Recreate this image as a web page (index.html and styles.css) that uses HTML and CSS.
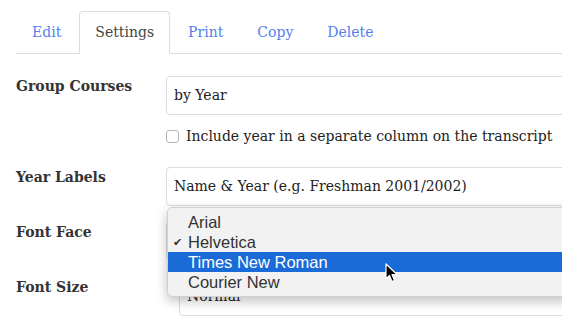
FILE: index.html
```html
<!DOCTYPE html>
<html>
<head>
    <title>Transcript Settings</title>
    <link rel="stylesheet" href="styles.css">
</head>
<body>
    <ul class="tabs">
        <li><a href="#">Edit</a></li>
        <li class="active"><a href="#">Settings</a></li>
        <li><a href="#">Print</a></li>
        <li><a href="#">Copy</a></li>
        <li><a href="#">Delete</a></li>
    </ul>

    <div class="form">
        <div class="row">
            <div class="label">Group Courses</div>
            <div class="control">
                <div class="input">by Year</div>
                <label class="check"><span class="box"></span>Include year in a separate column on the transcript</label>
            </div>
        </div>
        <div class="row">
            <div class="label">Year Labels</div>
            <div class="control">
                <div class="input">Name &amp; Year (e.g. Freshman 2001/2002)</div>
            </div>
        </div>
        <div class="row">
            <div class="label">Font Face</div>
            <div class="control">
                <div class="input select">Helvetica</div>
                <!-- open dropdown menu -->
                <ul class="menu">
                    <li>Arial</li>
                    <li class="checked">Helvetica</li>
                    <li class="hover">Times New Roman</li>
                    <li>Courier New</li>
                </ul>
                <svg class="cursor" width="14" height="22" viewBox="0 0 14 22">
                    <path d="M1 1 L1 16 L4.5 12.5 L7 18.5 L9.5 17.5 L7 11.5 L12 11.5 Z" fill="#000" stroke="#fff" stroke-width="1.2" stroke-linejoin="round"/>
                </svg>
            </div>
        </div>
        <div class="row">
            <div class="label">Font Size</div>
            <div class="control">
                <div class="input select">Normal</div>
            </div>
        </div>
    </div>
</body>
</html>
```

FILE: styles.css
```css
html, body {
    overflow: hidden;
}
body {
    margin: 0;
    padding: 11px 0 0 16px;
    font-family: "DejaVu Serif", Georgia, serif;
    font-size: 14px;
    color: #333;
    background: #fff;
}
.tabs {
    display: flex;
    list-style: none;
    margin: 0;
    padding: 0;
    border-bottom: 1px solid #ddd;
}
.tabs li {
    margin-right: 2px;
    margin-bottom: -1px;
}
.tabs a {
    display: block;
    padding: 10px 15px 11px;
    line-height: 20px;
    border: 1px solid transparent;
    border-radius: 4px 4px 0 0;
    color: #5580ea;
    text-decoration: none;
}
.tabs .active a {
    color: #444;
    border-color: #ddd #ddd #fff;
    background: #fff;
}
.form {
    padding-top: 22px;
}
.row {
    display: flex;
    margin-bottom: 16px;
}
.label {
    width: 150px;
    flex: none;
    line-height: 20px;
    font-weight: bold;
    color: #333;
}
.control {
    position: relative;
    width: 520px;
    flex: none;
}
.input {
    height: 37px;
    line-height: 37px;
    padding: 0 7px;
    border: 1px solid #dcdcdc;
    border-radius: 4px;
    color: #222;
}
.check {
    display: flex;
    align-items: center;
    margin: 11px 0 5px;
    line-height: 20px;
    color: #222;
}
.box {
    width: 11px;
    height: 11px;
    margin-right: 7px;
    border: 1px solid #b5b5b5;
    border-radius: 3px;
    background: #fff;
}
.row:last-child .input {
    margin-left: 13px;
}
.menu {
    position: absolute;
    left: 1px;
    top: -15px;
    width: 500px;
    margin: 0;
    padding: 4px 0 4px;
    list-style: none;
    background: #f2f2f2;
    border: 1px solid #d0d0d0;
    border-radius: 5px;
    box-shadow: 0 4px 12px rgba(0, 0, 0, 0.25);
    font-family: "Liberation Sans", Arial, sans-serif;
    font-size: 16.5px;
    color: #333;
    z-index: 2;
}
.menu li {
    height: 20px;
    line-height: 20px;
    padding-left: 20px;
    position: relative;
}
.menu .checked::before {
    content: "\2714";
    position: absolute;
    left: 5px;
    font-size: 11px;
}
.menu .hover {
    background: #1a6bd8;
    color: #fff;
}
.cursor {
    position: absolute;
    left: 219px;
    top: 41px;
    z-index: 3;
}
```
